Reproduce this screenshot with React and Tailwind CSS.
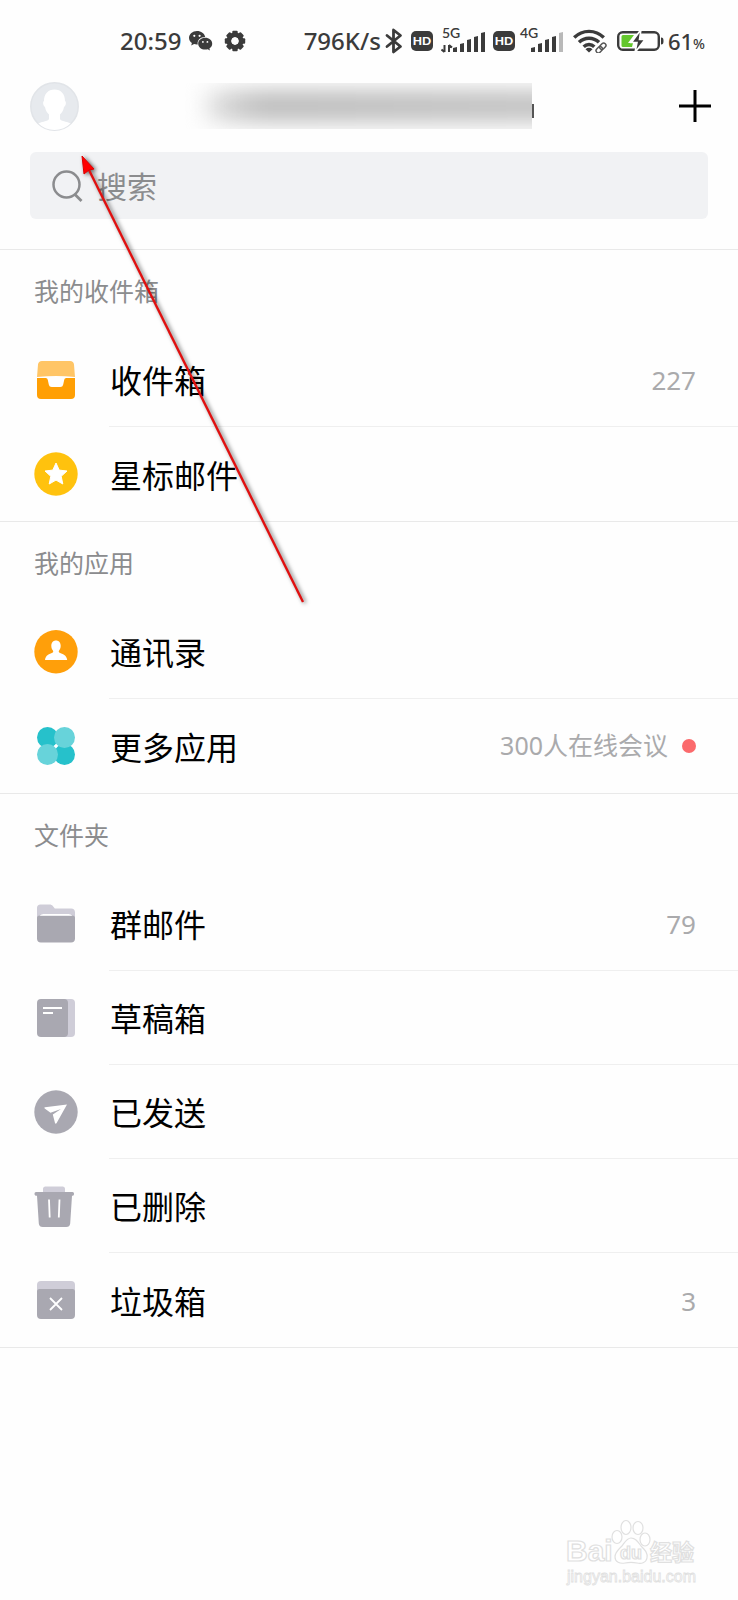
import React, { useState } from "react";

// ── Status bar icons ────────────────────────────────────────────────────────
function WechatIcon() {
  return (
    <svg width="24" height="20" viewBox="0 0 24 20" aria-hidden="true">
      <path d="M8 0C3.6 0 0 3 0 6.8c0 2.100 1.100 4 2.900 5.200L2.200 14.500l2.900-1.500c.9.3 1.900.4 2.900.4h.7C8 9 11.500 5.900 16.200 6 15.500 2.500 12.100 0 8 0z" fill="#3b3b3b" />
      <path d="M16.200 6.800c-3.900 0-7 2.600-7 5.900s3.100 5.900 7 5.900c.9 0 1.700-.1 2.500-.4l2.300 1.300-.6-2.100c1.700-1.100 2.800-2.800 2.800-4.700 0-3.300-3.100-5.900-7-5.900z" fill="#3b3b3b" />
      <g fill="#fff">
        <circle cx="5.300" cy="4.800" r="1.100" />
        <circle cx="10.600" cy="4.800" r="1.100" />
        <circle cx="13.900" cy="10.900" r="0.900" />
        <circle cx="18.400" cy="10.900" r="0.900" />
      </g>
    </svg>
  );
}

function GearIcon() {
  return (
    <svg width="22" height="22" viewBox="0 0 22 22" aria-hidden="true">
      <circle cx="11" cy="11" r="6.200" fill="none" stroke="#3b3b3b" strokeWidth="4.600" />
      <g fill="#3b3b3b">
        <rect x="8.300" y="0.800" width="5.400" height="20.400" rx="1" mask="url(#gear-hole)" />
        <rect x="8.300" y="0.800" width="5.400" height="20.400" rx="1" mask="url(#gear-hole)" transform="rotate(45 11 11)" />
        <rect x="8.300" y="0.800" width="5.400" height="20.400" rx="1" mask="url(#gear-hole)" transform="rotate(90 11 11)" />
        <rect x="8.300" y="0.800" width="5.400" height="20.400" rx="1" mask="url(#gear-hole)" transform="rotate(135 11 11)" />
      </g>
      <mask id="gear-hole">
        <rect width="22" height="22" fill="#fff" />
        <circle cx="11" cy="11" r="4" fill="#000" />
      </mask>
    </svg>
  );
}

function BluetoothIcon() {
  return (
    <svg width="18" height="26" viewBox="0 0 18 26" aria-hidden="true">
      <path d="M2 7.500l13.500 11-7 5.500V2l7 5.500L2 18.500" fill="none" stroke="#3b3b3b" strokeWidth="2.800" strokeLinejoin="round" strokeLinecap="round" />
    </svg>
  );
}

function HdBadge() {
  return (
    <span className="flex h-5 w-[22px] items-center justify-center rounded-[5px] bg-[#3b3b3b] font-['Lato',sans-serif] text-[12px] leading-none font-black text-white">
      HD
    </span>
  );
}

function Signal({ label, level, data }) {
  const bars = [
    { x: 12, h: 5 },
    { x: 19, h: 9 },
    { x: 26, h: 13 },
    { x: 33, h: 16 },
    { x: 40, h: 20 },
  ];
  return (
    <svg width="46" height="36" viewBox="0 -5 46 36" aria-label={`${label} signal`}>
      <text x="1" y="10" fontSize="14" fill="#3b3b3b" className="font-['Lato',sans-serif] font-semibold">
        {label}
      </text>
      {bars.map((bar, i) => (
        <path
          key={bar.x}
          d={`M${bar.x} ${24 - bar.h + 1}l4-1v${bar.h}h-4z`}
          fill={i < level ? "#3b3b3b" : "#b9b9b9"}
        />
      ))}
      {data && (
        <path d="M3.500 17v7M0.500 21.500l3 2.500M8 24v-7M11 19.500L8 17" fill="none" stroke="#3b3b3b" strokeWidth="2" />
      )}
    </svg>
  );
}

function WifiIcon() {
  return (
    <svg width="34" height="24" viewBox="0 0 34 24" aria-label="Wi-Fi">
      <g fill="none" stroke="#3b3b3b" strokeWidth="3.400">
        <path d="M1.200 8.500C9.500 0.300 22.500 0.300 30.800 8.500" />
        <path d="M6 13.300c5.600-5.500 14.400-5.500 20 0" />
        <path d="M10.700 17.700c3-3 7.600-3 10.600 0" />
      </g>
      <path d="M12.500 20.200a5 5 0 0 1 7 0L16 23.600z" fill="#3b3b3b" />
      <g fill="none" stroke="#fff" strokeWidth="4.500" transform="rotate(-45 28 19)">
        <rect x="22.500" y="16.800" width="11" height="4.400" rx="2.200" />
      </g>
      <g fill="none" stroke="#555" strokeWidth="1.500" transform="rotate(-45 28 19)">
        <rect x="22" y="16.700" width="7" height="4.600" rx="2.300" />
        <rect x="27" y="16.700" width="7" height="4.600" rx="2.300" />
      </g>
    </svg>
  );
}

function BatteryIcon() {
  return (
    <svg width="47" height="24" viewBox="0 0 47 24" aria-label="Battery charging">
      <rect x="1.200" y="3.200" width="40.600" height="17.600" rx="4.500" fill="none" stroke="#3b3b3b" strokeWidth="2.400" />
      <path d="M6 6h11l-6 8h5l-1 4H6a1.500 1.500 0 0 1-1.500-1.500v-9A1.500 1.500 0 0 1 6 6z" fill="#63c72c" />
      <path d="M24 0.500L14.500 13.500h5.500L18 23.500l10-13h-5.500z" fill="#3b3b3b" stroke="#fff" strokeWidth="1.600" />
      <path d="M44 8.500c2 0 2.500 1 2.500 3.500s-.5 3.500-2.500 3.500z" fill="#3b3b3b" />
    </svg>
  );
}

function StatusBar() {
  return (
    <div className="flex h-[82px] items-center justify-between pr-[33px] pl-[120px] text-[24px] leading-none font-medium text-[#3b3b3b]">
      <div className="flex items-center">
        <span>20:59</span>
        <span className="ml-2"><WechatIcon /></span>
        <span className="ml-[11px]"><GearIcon /></span>
      </div>
      <div className="flex items-center">
        <span>796K/s</span>
        <span className="ml-1"><BluetoothIcon /></span>
        <span className="ml-2"><HdBadge /></span>
        <span className="ml-2"><Signal label="5G" level={5} data /></span>
        <span className="ml-1.5"><HdBadge /></span>
        <span className="ml-1"><Signal label="4G" level={4} /></span>
        <span className="ml-2"><WifiIcon /></span>
        <span className="ml-2.5"><BatteryIcon /></span>
        <span className="ml-1 text-[22px]">61</span>
        <span className="pt-1.5 text-[14px]">%</span>
      </div>
    </div>
  );
}

// ── Folder icons, all on a 44x44 box ────────────────────────────────────────
function Icon({ children }) {
  return (
    <svg width="44" height="44" viewBox="0 0 44 44" className="shrink-0" aria-hidden="true">
      {children}
    </svg>
  );
}

const icons = {
  inbox: (
    <Icon>
      <path d="M8 3h28a4 4 0 0 1 4 3.500l1 12.500Q22 17 3 19L4 6.500A4 4 0 0 1 8 3z" fill="#ffc566" />
      <path d="M3 20h8.500c1.500 0 2 .8 2.300 2l1 4.500c.4 1.700 1.300 2.500 3 2.500h8.400c1.700 0 2.600-.8 3-2.500l1-4.500c.3-1.200.8-2 2.300-2H41v17a4 4 0 0 1-4 4H7a4 4 0 0 1-4-4z" fill="#ff9f04" />
    </Icon>
  ),
  star: (
    <Icon>
      <circle cx="22" cy="22" r="21.700" fill="#ffc20e" />
      <path d="M22 11l3.200 7.100 7.800.9-5.800 5.300 1.600 7.700L22 28.100 15.200 32l1.600-7.700L11 19l7.800-.9z" fill="#fff" stroke="#fff" strokeLinejoin="round" />
    </Icon>
  ),
  contacts: (
    <Icon>
      <circle cx="22" cy="21.700" r="21.700" fill="#ff9f0a" />
      <path d="M22 10.500c2.900 0 4.700 2.200 4.700 5.300 0 2-.6 3.600-1.600 4.800-.5.6-.5 1.800.5 2.200 3 1.400 7 2.200 7.600 7.200H11c.6-5 4.400-5.800 7.400-7.200 1-.4 1-1.600.5-2.200-1-1.200-1.600-2.800-1.600-4.800 0-3.100 1.800-5.300 4.700-5.300z" fill="#fff" />
    </Icon>
  ),
  apps: (
    <Icon>
      <circle cx="13.500" cy="13.500" r="10.500" fill="#26c1cb" />
      <circle cx="30.500" cy="30.500" r="10.500" fill="#26c1cb" />
      <circle cx="30.500" cy="13.500" r="10.500" fill="#67d3da" />
      <circle cx="13.500" cy="30.500" r="10.500" fill="#67d3da" />
      <circle cx="22" cy="22" r="1.500" fill="#fff" />
    </Icon>
  ),
  folder: (
    <Icon>
      <path d="M3 14V6a3.500 3.500 0 0 1 3.500-3.500h9c1.500 0 2.500.5 3.300 1.500l2 2.500H37A4 4 0 0 1 41 10.500V16H3z" fill="#cfcdd8" />
      <path d="M3 16a2.500 2.500 0 0 1 2.500-2.500h33A2.500 2.500 0 0 1 41 16v20.500a4 4 0 0 1-4 4H7a4 4 0 0 1-4-4z" fill="#a9a8b1" />
      <path d="M5.500 13.800q2-1.800 4-1.800h25q2 0 4 1.800z" fill="#fff" />
    </Icon>
  ),
  drafts: (
    <Icon>
      <rect x="20" y="3" width="21" height="38" rx="4" fill="#cfcdd8" />
      <rect x="3" y="3" width="31" height="38" rx="4" fill="#a9a8b1" />
      <path d="M9 12h19M9 17h10" stroke="#fff" strokeWidth="2" />
    </Icon>
  ),
  sent: (
    <Icon>
      <circle cx="22" cy="22" r="21.700" fill="#a9a8b1" />
      <path d="M33 14.500L11 17.300c-.8.2-.8.8-.3 1.200l5.800 4.300L27 19l-8.200 5.500 2.200 8.500c.3.900 1 .9 1.500.2z" fill="#fff" />
    </Icon>
  ),
  trash: (
    <Icon>
      <path d="M9 9V5a2.500 2.500 0 0 1 2.500-2.500h17A2.500 2.500 0 0 1 31 5v4z" fill="#cfcdd8" />
      <path d="M2 8h36.500c1 0 1.500.8 1.500 2 0 1.300-.8 1.800-2 1.800l-1.800 27.700a4 4 0 0 1-4 3.500H8.800a4 4 0 0 1-4-3.500L3 11.800C1.500 11.800.5 11.300.5 10c0-1.200.5-2 1.500-2z" fill="#a9a8b1" />
      <path d="M15 15.500l.7 18M25.500 15.500l-.7 18" stroke="#fff" strokeWidth="1.800" />
    </Icon>
  ),
  spam: (
    <Icon>
      <path d="M3 13V7a4 4 0 0 1 4-4h30a4 4 0 0 1 4 4v6z" fill="#cfcdd8" />
      <path d="M3 13.500A2.500 2.500 0 0 1 5.500 11h33a2.500 2.500 0 0 1 2.500 2.500V37a4 4 0 0 1-4 4H7a4 4 0 0 1-4-4z" fill="#a9a8b1" />
      <path d="M16 20l12 12M28 20L16 32" stroke="#fff" strokeWidth="1.800" />
    </Icon>
  ),
};

const sections = [
  {
    title: "我的收件箱",
    items: [
      { icon: "inbox", label: "收件箱", count: "227" },
      { icon: "star", label: "星标邮件" },
    ],
  },
  {
    title: "我的应用",
    items: [
      { icon: "contacts", label: "通讯录" },
      { icon: "apps", label: "更多应用", note: "300人在线会议" },
    ],
  },
  {
    title: "文件夹",
    items: [
      { icon: "folder", label: "群邮件", count: "79" },
      { icon: "drafts", label: "草稿箱" },
      { icon: "sent", label: "已发送" },
      { icon: "trash", label: "已删除" },
      { icon: "spam", label: "垃圾箱", count: "3" },
    ],
  },
];

function FolderRow({ item, last }) {
  return (
    <li>
      <button type="button" className="flex h-[94px] w-full items-center pl-[34px] text-left">
        {icons[item.icon]}
        <span
          className={`ml-[31px] flex h-full flex-1 items-center justify-between pr-[42px] pl-px ${
            last ? "" : "border-b border-[#efefef]"
          }`}
        >
          <span className="pt-[3px] text-[32px] text-black">{item.label}</span>
          {item.count && <span className="pt-0.5 text-[26px] text-[#aaaaac]">{item.count}</span>}
          {item.note && (
            <span className="flex items-center gap-3.5 text-[25px] text-[#aaaaac]">
              {item.note}
              <span className="size-3.5 rounded-full bg-[#fb6a6c]" />
            </span>
          )}
        </span>
      </button>
    </li>
  );
}

// ── Header ──────────────────────────────────────────────────────────────────
function Header() {
  return (
    <header className="flex h-12 items-center justify-between pr-[26px] pl-[30px]">
      <button type="button" aria-label="Account" className="shrink-0">
        <svg width="49" height="49" viewBox="0 0 49 49">
          <clipPath id="avatar-clip">
            <circle cx="24.500" cy="24.500" r="23.500" />
          </clipPath>
          <circle cx="24.500" cy="24.500" r="23.700" fill="#e7eaee" stroke="#e1e4e8" strokeWidth="1.500" />
          <path
            d="M24.500 7.500c6.500 0 10.500 4.500 10.500 11.500 1.500.5 1 5-1 6-.7 4-2.500 6-4 7.500v4c0 1.500 1.500 2 4 2.700 4 1 8 2 8 4.300v7H7v-7c0-2.300 4-3.300 8-4.300 2.500-.7 4-1.200 4-2.700v-4c-1.500-1.500-3.300-3.500-4-7.500-2-1-2.500-5.500-1-6 0-7 4-11.500 10.500-11.500z"
            fill="#fff"
            clipPath="url(#avatar-clip)"
          />
        </svg>
      </button>
      <div className="mr-36 ml-[106px] flex flex-1 items-center">
        <div className="relative h-[46px] flex-1 overflow-hidden">
          <div className="absolute inset-y-3 -right-8 left-6 bg-linear-to-r from-[#d0d0d0] via-[#a0a0a0] via-15% to-[#a8a8a8] blur-[13px]" />
        </div>
        <div className="mt-2.5 h-3.5 w-0.5 bg-[#555]" />
      </div>
      <button type="button" aria-label="New" className="shrink-0">
        <svg width="34" height="34" viewBox="0 0 34 34">
          <path d="M1 17h32M17 1v32" stroke="#000" strokeWidth="3" />
        </svg>
      </button>
    </header>
  );
}

function SearchBox() {
  const [query, setQuery] = useState("");
  return (
    <label className="mx-[30px] mt-[22px] mb-[30px] flex h-[67px] items-center gap-3.5 rounded-md bg-[#f1f2f4] pl-[22px]">
      <svg width="31" height="33" viewBox="0 0 31 33" className="shrink-0" aria-hidden="true">
        <circle cx="14.500" cy="15.500" r="13" fill="none" stroke="#8b8c8e" strokeWidth="2.500" />
        <path d="M22.500 25l7 7" stroke="#8b8c8e" strokeWidth="2.800" />
      </svg>
      <input
        type="search"
        aria-label="搜索"
        placeholder="搜索"
        value={query}
        onChange={(e) => setQuery(e.target.value)}
        className="min-w-0 flex-1 bg-transparent pt-0.5 text-[30px] text-[#333] outline-none placeholder:text-[#8b8c8e]"
      />
    </label>
  );
}

// Red pointer lying over the list, aimed at the avatar
function Pointer() {
  return (
    <svg
      width="240"
      height="460"
      viewBox="0 0 240 460"
      className="pointer-events-none absolute top-[150px] left-[74px] drop-shadow-[2px_1px_2px_rgba(0,0,0,0.6)]"
      aria-hidden="true"
    >
      <path d="M15 20l214 432" stroke="#e01010" strokeWidth="2.400" />
      <path d="M8 6l12 13-5 1-5 4z" fill="#f00" stroke="#d00" />
    </svg>
  );
}

function Watermark() {
  return (
    <svg width="144" height="72" viewBox="0 0 144 72" className="block" aria-label="Baidu 经验">
      <g fill="#fff" stroke="#e0e0e0" strokeWidth="1.200">
        <text x="6" y="43" fontSize="30" className="font-['Liberation_Sans',Arial,sans-serif] font-bold">Bai</text>
        <ellipse cx="57" cy="19" rx="5" ry="6.500" />
        <ellipse cx="66" cy="9.500" rx="5" ry="7" />
        <ellipse cx="78" cy="10" rx="5" ry="6.500" />
        <ellipse cx="85" cy="21.500" rx="5" ry="6.500" />
        <path d="M71 20c5 0 7 4 10 8 4 4 7 7 6 12-1 5-6 6-10 5-4-.7-8-.7-12 0-5 1-10-1-10-6s4-8 7-11c3-4 5-8 9-8z" />
        <text x="60" y="41" fontSize="18" className="font-['Liberation_Sans',Arial,sans-serif] font-bold">du</text>
        <text x="90" y="42" fontSize="22" className="font-['Noto_Sans_CJK_SC',sans-serif] font-bold">经验</text>
      </g>
      <text x="7" y="64" fontSize="16" fill="#fff" stroke="#e0e0e0" strokeWidth="0.800" className="font-['Liberation_Sans',Arial,sans-serif]">
        jingyan.baidu.com
      </text>
    </svg>
  );
}

export default function App() {
  return (
    <div className="relative flex min-h-screen flex-col bg-[#fefefe] font-['Noto_Sans','Noto_Sans_CJK_SC',sans-serif]">
      <StatusBar />
      <Header />
      <SearchBox />

      <main className="border-b border-[#e9e9e9]">
        {sections.map((section) => (
          <section key={section.title} className="border-t border-[#e9e9e9]">
            <h2 className="flex h-[83px] items-center pl-[34px] text-[25px] text-[#8b8c8e]">{section.title}</h2>
            <ul>
              {section.items.map((item, i) => (
                <FolderRow key={item.label} item={item} last={i === section.items.length - 1} />
              ))}
            </ul>
          </section>
        ))}
      </main>

      <footer className="mt-auto flex justify-end pr-[34px] pb-2.5">
        <Watermark />
      </footer>

      <Pointer />
    </div>
  );
}
